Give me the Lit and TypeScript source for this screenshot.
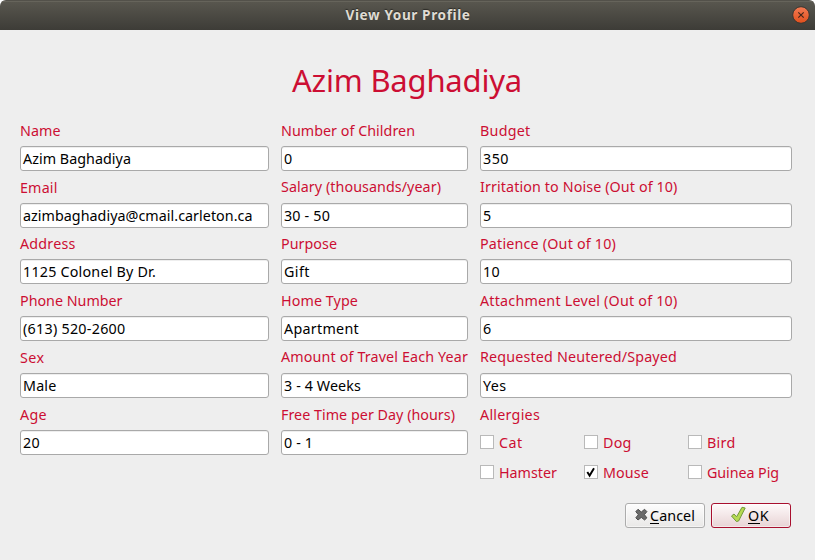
import { LitElement, html, css, svg } from "lit";
import { customElement, property } from "lit/decorators.js";

/** A run of text whose tracking is adjusted so that it occupies `width` pixels. */
@customElement("tracked-text")
class TrackedText extends LitElement {
  @property() text = "";
  @property({ type: Number }) width = 0;
  @property({ type: Boolean }) mnemonic = false;

  static styles = css`
    :host { display: inline-block; white-space: pre; }
    .key { border-bottom: 1px solid #000; display: inline-block; line-height: 17px; height: 16px; }
  `;

  render() {
    return this.mnemonic
      ? html`<span class="run"><span class="key">${this.text[0]}</span>${this.text.slice(1)}</span>`
      : html`<span class="run">${this.text}</span>`;
  }

  updated() {
    const run = this.renderRoot.querySelector(".run") as HTMLElement;
    run.style.letterSpacing = "0px";
    const natural = run.getBoundingClientRect().width;
    run.style.letterSpacing = `${(this.width - natural) / this.text.length}px`;
  }
}

type Field = { label: string; lw: number; value?: string; vw?: number; up?: boolean };

const rows: Field[][] = [
  [
    { label: "Name", lw: 40.5, value: "Azim Baghadiya", vw: 108 },
    { label: "Number of Children", lw: 134, value: "0", vw: 9 },
    { label: "Budget", lw: 50.5, value: "350", vw: 26 },
  ],
  [
    { label: "Email", lw: 37.5, value: "azimbaghadiya@cmail.carleton.ca", vw: 229.5 },
    { label: "Salary (thousands/year)", lw: 160, value: "30 - 50", vw: 46, up: true },
    { label: "Irritation to Noise (Out of 10)", lw: 197.5, value: "5", vw: 9, up: true },
  ],
  [
    { label: "Address", lw: 55.5, value: "1125 Colonel By Dr.", vw: 133 },
    { label: "Purpose", lw: 56, value: "Gift", vw: 26 },
    { label: "Patience (Out of 10)", lw: 136, value: "10", vw: 17 },
  ],
  [
    { label: "Phone Number", lw: 102.5, value: "(613) 520-2600", vw: 102.5 },
    { label: "Home Type", lw: 77, value: "Apartment", vw: 75 },
    { label: "Attachment Level (Out of 10)", lw: 197.5, value: "6", vw: 9 },
  ],
  [
    { label: "Sex", lw: 24.5, value: "Male", vw: 33.5 },
    { label: "Amount of Travel Each Year", lw: 187, value: "3 - 4 Weeks", vw: 77, up: true },
    { label: "Requested Neutered/Spayed", lw: 197, value: "Yes", vw: 23.5, up: true },
  ],
  [
    { label: "Age", lw: 27, value: "20", vw: 17 },
    { label: "Free Time per Day (hours)", lw: 174, value: "0 - 1", vw: 29 },
    { label: "Allergies", lw: 60 },
  ],
];

const allergies = [
  { name: "Cat", w: 23.5, on: false },
  { name: "Dog", w: 28.5, on: false },
  { name: "Bird", w: 28.5, on: false },
  { name: "Hamster", w: 58, on: false },
  { name: "Mouse", w: 46, on: true },
  { name: "Guinea Pig", w: 72, on: false },
];

const tick = svg`<path d="M3.3 7 L5.6 10.6 L10 3.2" fill="none" stroke="#000" stroke-width="1.9"/>`;

@customElement("app-root")
class AppRoot extends LitElement {
  static styles = css`
    :host {
      display: block; width: 815px; height: 560px; background: #fff; overflow: hidden;
      font-family: "Noto Sans", "Open Sans", sans-serif; font-size: 14.3px; line-height: 20px; color: #000;
    }
    * { box-sizing: border-box; }
    .window { display: flex; flex-direction: column; height: 560px; border-radius: 6px 6px 0 0; overflow: hidden; background: #eeeeee; }
    .bar {
      height: 30px; flex: none; display: grid; grid-template-columns: 1fr auto 1fr; align-items: center;
      background: linear-gradient(#59574f, #3d3c37); border-top: 1px solid #53514a;
      box-shadow: inset 0 1px #66645b; padding: 0 5px 0 6px;
    }
    .bar-title { grid-column: 2; color: #dfdbd2; font-weight: 700; font-size: 13.6px; text-shadow: 0 -1px 1px #2c2b27; height: 20px; margin-top: -2px; }
    .close { justify-self: end; width: 18px; height: 18px; display: block; margin-top: -1px; }
    .body { padding: 29px 23px 0 20px; display: flex; flex-direction: column; }
    .heading { height: 62px; text-align: center; color: #cc0e33; font-size: 31px; line-height: 42px; padding-left: 2px; }
    .form { display: grid; grid-template-columns: 249px 187px 312px; grid-template-rows: 57px 56px 57px 57px 57px 80px; column-gap: 12px; }
    .label { height: 25px; color: #cc0e33; display: flex; }
    .up { margin-top: -1px; height: 26px; }
    .field {
      height: 25px; border: 1px solid #a9a9a9; border-radius: 3px; background: #fff; padding: 2px 0 0 2px;
      box-shadow: inset 0 1px #eeeeee; display: flex;
    }
    .checks { display: grid; grid-template-columns: repeat(3, 104px); grid-auto-rows: 30px; padding-top: 5px; }
    .check { display: flex; gap: 5px; color: #cc0e33; }
    .box { width: 14px; height: 14px; border: 1px solid #b9b9b9; background: #fff; flex: none; display: block; }
    .name { margin-top: -2px; height: 20px; }
    .actions { display: flex; justify-content: flex-end; gap: 6px; margin-top: 18px; padding-right: 1px; }
    .button {
      width: 80px; height: 25px; border: 1px solid #acacac; border-radius: 3px; display: flex; padding: 2px 0 0 8px; gap: 0;
      background: linear-gradient(#fdfdfd, #e9e8e7); box-shadow: inset 0 0 0 1px rgba(255,255,255,.5);
    }
    .ok { border-color: #a80f2e; background: linear-gradient(#fefafa, #e8d3d5); padding-left: 19px; gap: 1px; }
    .icon { width: 16px; height: 16px; margin-top: 1px; flex: none; }
    .ok .icon { margin-left: -1px; margin-right: 1px; margin-top: 0; }
  `;

  render() {
    return html`
      <div class="window">
        <div class="bar">
          <tracked-text class="bar-title" text="View Your Profile" width="125"></tracked-text>
          <svg class="close" viewBox="0 0 18 18">
            <defs>
              <linearGradient id="g" x2="0" y2="1"><stop stop-color="#f47b54"/><stop offset="1" stop-color="#e04f1c"/></linearGradient>
            </defs>
            <circle cx="9" cy="9" r="8.3" fill="url(#g)" stroke="#383631" stroke-width="1"/>
            <path d="M6.3 6.3 11.7 11.7M11.7 6.3 6.3 11.7" stroke="#45261a" stroke-width="1.2"/>
          </svg>
        </div>
        <div class="body">
          <div class="heading"><tracked-text text="Azim Baghadiya" width="230"></tracked-text></div>
          <div class="form">
            ${rows.flat().map((f) => html`
              <div>
                <div class="label ${f.up ? "up" : ""}"><tracked-text .text=${f.label} .width=${f.lw}></tracked-text></div>
                ${f.value
                  ? html`<div class="field"><tracked-text .text=${f.value} .width=${f.vw ?? 0}></tracked-text></div>`
                  : html`<div class="checks">${allergies.map((a) => html`
                      <div class="check">
                        <svg class="box" viewBox="1 1 12 12">${a.on ? tick : null}</svg>
                        <tracked-text class="name" .text=${a.name} .width=${a.w}></tracked-text>
                      </div>`)}</div>`}
              </div>`)}
          </div>
          <div class="actions">
            <div class="button">
              <svg class="icon" viewBox="0 0 16 16">
                <path d="M4 2.3 7.3 5 10.6 2.3 12.9 4.6 10.4 7.7 12.9 10.8 10.6 13 7.3 10.4 4 13 1.8 10.8 4.3 7.7 1.8 4.6Z" fill="#6a6a6a" stroke="#4e4e4e" stroke-linejoin="round"/>
              </svg>
              <tracked-text text="Cancel" width="45" mnemonic></tracked-text>
            </div>
            <div class="button ok">
              <svg class="icon" viewBox="0 0 16 16">
                <path d="M1.5 10 4 8 6.6 10.8 12 1.3 15.2 2 8.6 15 6.4 15.5Z" fill="#b7da52" stroke="#71983a" stroke-linejoin="round"/>
              </svg>
              <tracked-text text="OK" width="21" mnemonic></tracked-text>
            </div>
          </div>
        </div>
      </div>
    `;
  }
}
